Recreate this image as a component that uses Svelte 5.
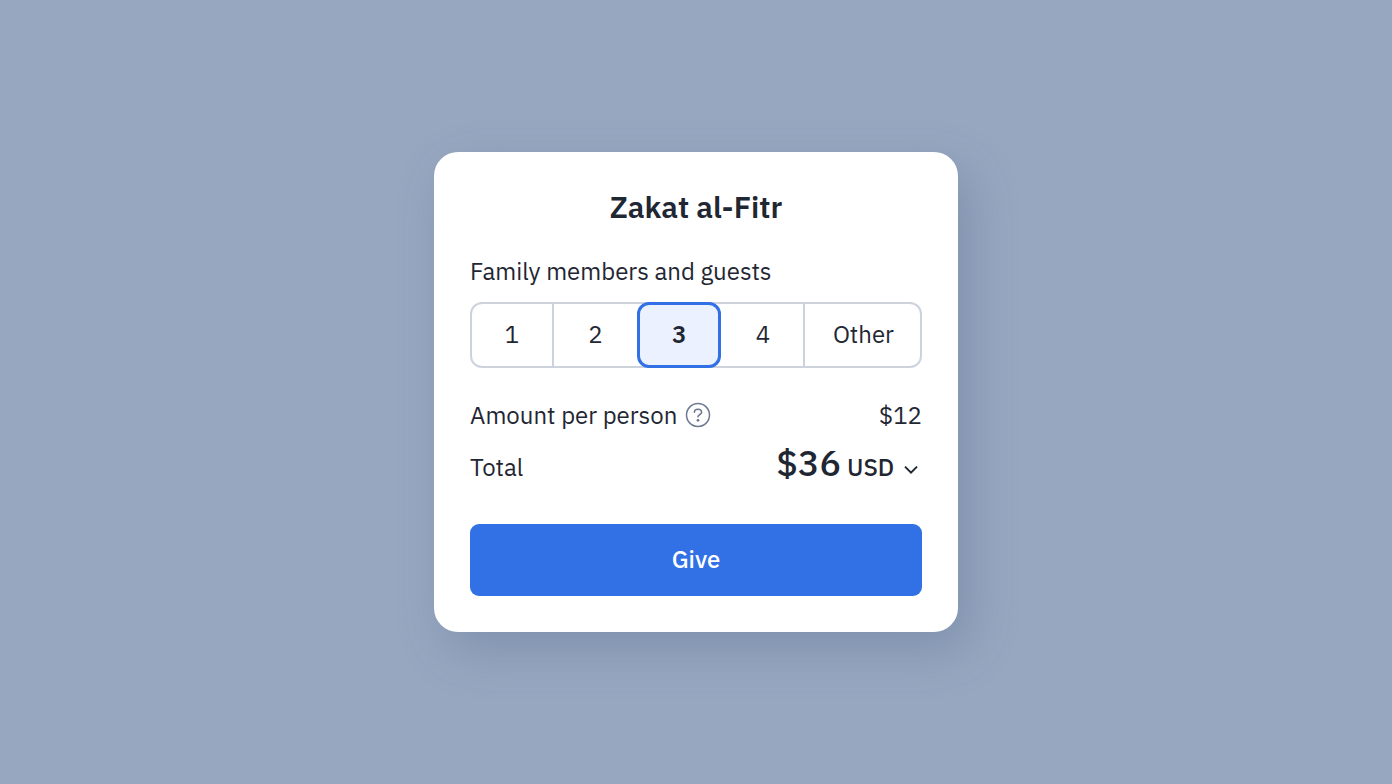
<script lang="ts">
	const options = [
		{ value: 1, label: "1" },
		{ value: 2, label: "2" },
		{ value: 3, label: "3" },
		{ value: 4, label: "4" },
		{ value: 5, label: "Other" },
	];
	const currencies = ["USD", "EUR", "GBP"];
	const amount = 12;

	let people = $state(3);
	let currency = $state("USD");
	let total = $derived(people * amount);
</script>

<main>
	<form class="card" onsubmit={(e) => e.preventDefault()}>
		<h1>Zakat al-Fitr</h1>

		<fieldset>
			<legend>Family members and guests</legend>
			<div class="segments">
				{#each options as option}
					<label class="segment" class:active={people === option.value}>
						<input type="radio" name="people" value={option.value} bind:group={people} />
						<span>{option.label}</span>
					</label>
				{/each}
			</div>
		</fieldset>

		<div class="row">
			<span>Amount per person</span>
			<button type="button" class="help" aria-label="About the amount per person">
				<svg viewBox="0 0 26 26" fill="none" stroke="currentColor">
					<circle cx="13" cy="13" r="11.5" stroke-width="1.5" />
					<path
						d="M9.4 10.3C9.4 8.3 11 7.2 13 7.2S16.6 8.4 16.6 10.3C16.6 12.6 13 12.3 13 14.8"
						stroke-width="1.6"
						stroke-linecap="round"
					/>
					<circle cx="13" cy="18.3" r="1.4" fill="currentColor" stroke="none" />
				</svg>
			</button>
			<span class="price">$12</span>
		</div>

		<div class="row total">
			<label for="currency">Total</label>
			<output class="sum">${total}</output>
			<div class="currency">
				<select id="currency" bind:value={currency}>
					{#each currencies as code}
						<option>{code}</option>
					{/each}
				</select>
				<svg viewBox="0 0 14 10" fill="none" stroke="currentColor" aria-hidden="true">
					<path d="M1 1.6 7 7.6 13 1.6" stroke-width="2" />
				</svg>
			</div>
		</div>

		<button type="submit" class="give">Give</button>
	</form>
</main>

<style>
	:global(body) {
		margin: 0;
		background: #98a7c0;
	}

	main {
		min-height: 100vh;
		display: grid;
		place-items: center;
		font-family: "IBM Plex Sans", Roboto, "Noto Sans", sans-serif;
		font-size: 24px;
		line-height: 34px;
		color: #1f2733;
	}

	.card {
		box-sizing: border-box;
		width: 100%;
		max-width: 524px;
		padding: 36px;
		border-radius: 24px;
		background: #fff;
		box-shadow: 12px 18px 48px rgba(60, 90, 124, 0.28);
	}

	h1 {
		margin: 0 0 28px;
		font-size: 30px;
		font-weight: 600;
		line-height: 38px;
		text-align: center;
	}

	fieldset {
		margin: 0 0 30px;
		padding: 0;
		border: 0;
		min-width: 0;
	}

	legend {
		padding: 0;
		margin-bottom: 14px;
	}

	.segments {
		display: grid;
		grid-template-columns: repeat(4, 5fr) 7fr;
		height: 66px;
		border-radius: 12px;
		box-shadow: inset 0 0 0 2px #ccd3dd;
	}

	.segment {
		display: flex;
		align-items: center;
		justify-content: center;
		box-sizing: border-box;
		padding-bottom: 2px;
		cursor: pointer;
		box-shadow: inset -2px 0 #ccd3dd;

		&:last-child,
		&:has(+ .active) {
			box-shadow: none;
		}

		&.active {
			border: 3px solid #3270e6;
			border-radius: 12px;
			background: #ebf1fe;
			box-shadow: none;
			font-weight: 600;
		}

		&:has(:focus-visible) {
			outline: 2px solid #98b7f3;
		}

		& input {
			position: absolute;
			opacity: 0;
			pointer-events: none;
		}
	}

	.row {
		display: flex;
		align-items: center;
	}

	.help {
		display: flex;
		margin-left: 8px;
		padding: 0;
		border: 0;
		background: none;
		color: #6b7890;
		cursor: pointer;

		& svg {
			width: 26px;
			height: 26px;
		}
	}

	.price {
		margin-left: auto;
	}

	.total {
		align-items: baseline;
		margin: 8px 0 38px;
	}

	.sum {
		margin-left: auto;
		font-size: 36px;
		font-weight: 500;
		line-height: 46px;
	}

	.currency {
		display: grid;
		align-items: center;
		margin-left: 6px;

		& select,
		& svg {
			grid-area: 1 / 1;
		}

		& select {
			appearance: none;
			padding: 0 27px 0 0;
			border: 0;
			background: none;
			color: inherit;
			font: inherit;
			font-weight: 500;
			cursor: pointer;
		}

		& svg {
			justify-self: end;
			width: 14px;
			height: 10px;
			margin: 6px 4px 0 0;
			pointer-events: none;
		}
	}

	.give {
		display: block;
		width: 100%;
		height: 72px;
		padding: 0 0 2px;
		border: 0;
		border-radius: 9px;
		background: #3270e6;
		color: #fff;
		font: inherit;
		font-weight: 500;
		cursor: pointer;
	}
</style>
